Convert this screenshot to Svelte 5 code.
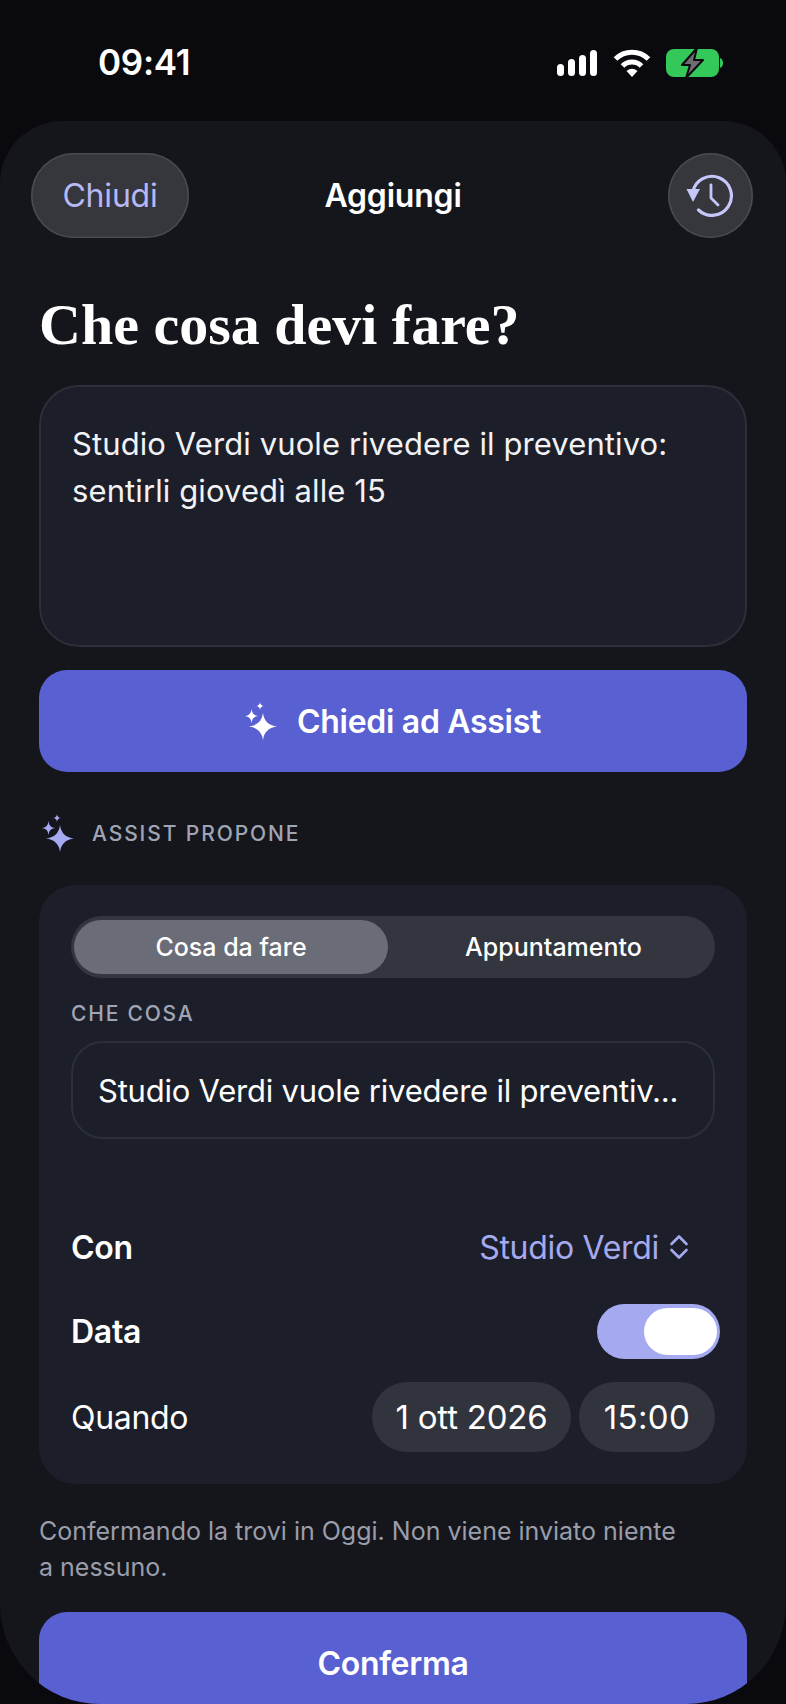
<script>
    let kind = $state('todo')
    let withDate = $state(true)
</script>

{#snippet sparkle(color)}
    <svg class="sparkle" viewBox="0 0 32 38" fill={color}>
        <path d="M18 11 Q19.5 23 32 24.5 Q19.5 26 18 38 Q16.5 26 4 24.5 Q16.5 23 18 11Z" />
        <path d="M6.5 7 Q7 13.5 13 14 Q7 14.5 6.5 21 Q6 14.5 0 14 Q6 13.5 6.5 7Z" />
        <path d="M15 0 Q15.3 3.7 19 4 Q15.3 4.3 15 8 Q14.7 4.3 11 4 Q14.7 3.7 15 0Z" />
    </svg>
{/snippet}

<div class="screen">
    <header class="status">
        <span class="time">09:41</span>
        <div class="status-icons">
            <svg width="41" height="26" viewBox="0 0 41 26" fill="#fff">
                <rect x="0" y="14" width="7" height="12" rx="3.5" />
                <rect x="11" y="9" width="7" height="17" rx="3.5" />
                <rect x="22" y="5" width="7" height="21" rx="3.5" />
                <rect x="33" y="0" width="7" height="26" rx="3.5" />
            </svg>
            <svg width="38" height="28" viewBox="0 0 38 28" fill="none" stroke="#fff" stroke-width="5">
                <path d="M2.5 10 C11.5 1 26.5 1 35.5 10" />
                <path d="M9.5 17 C14.5 11.5 23.5 11.5 28.5 17" />
                <path d="M13.5 22 Q19 17.5 24.5 22 L19 28Z" fill="#fff" stroke="none" />
            </svg>
            <svg width="57" height="30" viewBox="0 0 57 30">
                <rect x="0" y="1" width="53" height="28" rx="8" fill="#34c759" />
                <path d="M54 10 Q57 11 57 15 Q57 19 54 20Z" fill="#34c759" />
                <path d="M31 0 L16 17 H24 L20 30 L37 12 H28Z" fill="#6d6d72" stroke="#08080d" stroke-width="2" stroke-linejoin="round" />
            </svg>
        </div>
    </header>

    <main class="sheet">
        <nav class="topbar">
            <button class="glass close">Chiudi</button>
            <span class="title">Aggiungi</span>
            <button class="glass history" aria-label="Cronologia">
                <svg width="52" height="46" viewBox="0 0 52 46" fill="none" stroke="#c5c7fa" stroke-width="3.2" stroke-linecap="round" stroke-linejoin="round">
                    <path d="M7.8 19 A19.5 19.5 0 1 1 13.5 37" />
                    <path d="M26 12 V25 L33 32" stroke-width="2.8" />
                    <path d="M1.5 16 H15 L8 29Z" fill="#c5c7fa" stroke="none" />
                </svg>
            </button>
        </nav>

        <h1>Che cosa devi fare?</h1>

        <div class="note">Studio Verdi vuole rivedere il preventivo: sentirli giovedì alle 15</div>

        <button class="primary ask">
            {@render sparkle('#fff')}
            Chiedi ad Assist
        </button>

        <div class="proposal-label">
            {@render sparkle('#a5a9f0')}
            <span>ASSIST PROPONE</span>
        </div>

        <section class="card">
            <div class="segment">
                <button class:active={kind === 'todo'} onclick={() => (kind = 'todo')}>Cosa da fare</button>
                <button class:active={kind === 'event'} onclick={() => (kind = 'event')}>Appuntamento</button>
            </div>

            <div class="field-label">CHE COSA</div>
            <div class="field">Studio Verdi vuole rivedere il preventiv...</div>

            <div class="row con">
                <strong>Con</strong>
                <span class="picker">
                    Studio Verdi
                    <svg width="20" height="26" viewBox="0 0 20 26" fill="none" stroke="#a5a9ee" stroke-width="2.6" stroke-linecap="round" stroke-linejoin="round">
                        <path d="M2.5 10 L10 2.5 L17.5 10" />
                        <path d="M2.5 16 L10 23.5 L17.5 16" />
                    </svg>
                </span>
            </div>

            <div class="row data">
                <strong>Data</strong>
                <button class="toggle" class:on={withDate} aria-label="Data" onclick={() => (withDate = !withDate)}>
                    <span></span>
                </button>
            </div>

            <div class="row when">
                <span>Quando</span>
                <div class="pills">
                    <span class="pill date">1 ott 2026</span>
                    <span class="pill hour">15:00</span>
                </div>
            </div>
        </section>

        <p class="hint">Confermando la trovi in Oggi. Non viene inviato niente a nessuno.</p>

        <button class="primary confirm">Conferma</button>
    </main>
</div>

<style>
    :global(body) {
        background: #09090e;
    }

    .screen {
        width: 786px;
        height: 1704px;
        display: flex;
        flex-direction: column;
        overflow: hidden;
        background: #09090e;
        color: #fff;
        font-family: Inter, "Liberation Sans", sans-serif;
    }

    button {
        font-family: inherit;
        color: inherit;
        border: none;
        padding: 0;
    }

    .status {
        height: 121px;
        flex: none;
        box-sizing: border-box;
        padding: 44px 63px 0 98px;
        display: flex;
        justify-content: space-between;
        align-items: flex-start;
    }

    .time {
        font-size: 35px;
        line-height: 37px;
        font-weight: 600;
        letter-spacing: -0.3px;
    }

    .status-icons {
        display: flex;
        align-items: center;
        gap: 15px;
        margin-top: 4px;
    }

    .sheet {
        flex: 1;
        min-height: 0;
        overflow: hidden;
        background: #14161c;
        border-radius: 62px 62px 100px 100px;
        padding: 32px 39px 0;
    }

    .topbar {
        display: grid;
        grid-template-columns: 1fr auto 1fr;
        align-items: center;
        margin: 0 -6px 0 -8px;
    }

    .glass {
        height: 85px;
        background: #36373d;
        box-shadow: inset 0 0 0 1.5px #4a4b52;
        border-radius: 43px;
        display: flex;
        align-items: center;
        justify-content: center;
    }

    .close {
        width: 158px;
        font-size: 32px;
        letter-spacing: -0.2px;
        color: #b6b9f5;
    }

    .history {
        width: 85px;
        justify-self: end;
    }

    .title {
        font-size: 32px;
        font-weight: 600;
        letter-spacing: -0.2px;
        transform: translateX(1px);
    }

    h1 {
        font-family: "Liberation Serif", serif;
        font-size: 58px;
        line-height: 70px;
        font-weight: 700;
        margin: 52px 0 0;
    }

    .note {
        height: 262px;
        box-sizing: border-box;
        margin-top: 25px;
        padding: 33px 31px;
        background: #1c1f2a;
        border: 2px solid #2c2f3a;
        border-radius: 40px;
        font-size: 31px;
        letter-spacing: 0.1px;
        line-height: 47px;
        color: #f2f2f5;
    }

    .primary {
        width: 100%;
        background: #5960d2;
        border-radius: 28px;
        font-weight: 600;
        font-size: 32px;
        letter-spacing: -0.3px;
        color: #fff;
        display: flex;
        align-items: center;
        justify-content: center;
    }

    .ask {
        height: 102px;
        margin-top: 23px;
        gap: 20px;
    }

    .sparkle {
        width: 32px;
        height: 38px;
        flex: none;
    }

    .proposal-label {
        display: flex;
        align-items: center;
        gap: 18px;
        margin: 42px 0 33px 3px;
        font-size: 21px;
        font-weight: 500;
        letter-spacing: 1.9px;
        color: #a0a5b5;
    }

    .card {
        height: 599px;
        box-sizing: border-box;
        padding: 31px 32px 0;
        background: #1c1f2a;
        border-radius: 36px;
    }

    .segment {
        height: 62px;
        box-sizing: border-box;
        padding: 4px 0 4px 3px;
        background: #33353f;
        border-radius: 31px;
        display: grid;
        grid-template-columns: 314px 1fr;
    }

    .segment button {
        background: none;
        border-radius: 27px;
        font-size: 25px;
        font-weight: 500;
        padding-left: 4px;
    }

    .segment button.active {
        background: #6a6c78;
        padding-left: 0;
    }

    .field-label {
        margin-top: 23px;
        font-size: 21px;
        line-height: 26px;
        font-weight: 500;
        letter-spacing: 1.8px;
        color: #a0a5b5;
    }

    .field {
        height: 98px;
        box-sizing: border-box;
        margin-top: 14px;
        padding: 0 25px;
        border: 2px solid #2c2f3a;
        border-radius: 32px;
        display: flex;
        align-items: center;
        white-space: nowrap;
        font-size: 31px;
        letter-spacing: -0.22px;
    }

    .row {
        display: flex;
        justify-content: space-between;
        align-items: center;
        font-size: 32px;
        letter-spacing: -0.3px;
    }

    .row strong {
        font-weight: 600;
    }

    .con {
        margin-top: 81px;
        height: 54px;
    }

    .picker {
        display: flex;
        align-items: center;
        gap: 10px;
        padding-right: 26px;
        font-size: 32px;
        letter-spacing: -0.3px;
        color: #a5a9ee;
    }

    .data {
        margin-top: 30px;
        height: 55px;
        margin-right: -5px;
    }

    .toggle {
        width: 123px;
        height: 55px;
        border-radius: 28px;
        background: #a5a9f0;
        display: flex;
        justify-content: flex-end;
        align-items: center;
        padding: 0 3px;
    }

    .toggle span {
        width: 73px;
        height: 47px;
        border-radius: 24px;
        background: #fff;
    }

    .when {
        margin-top: 23px;
    }

    .pills {
        display: flex;
        gap: 8px;
    }

    .pill {
        height: 70px;
        border-radius: 35px;
        background: #32343d;
        font-size: 33px;
        letter-spacing: -0.2px;
        display: flex;
        align-items: center;
        justify-content: center;
    }

    .date {
        width: 199px;
    }

    .hour {
        width: 136px;
        letter-spacing: 0.4px;
    }

    .hint {
        margin: 29px 70px 0 0;
        font-size: 25px;
        line-height: 36px;
        color: #9a9daa;
    }

    .confirm {
        height: 140px;
        margin-top: 27px;
        padding-bottom: 38px;
    }
</style>
